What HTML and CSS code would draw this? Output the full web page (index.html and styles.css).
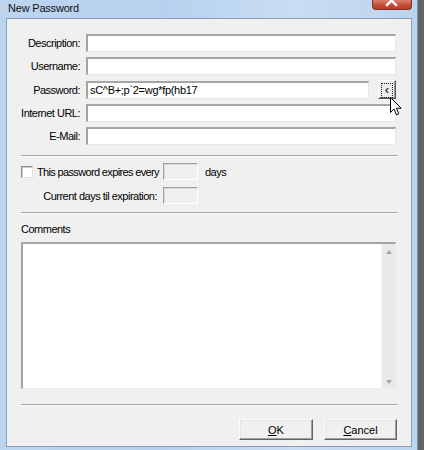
FILE: index.html
```html
<!DOCTYPE html>
<html lang="en">
<head>
<meta charset="UTF-8" />
<title>New Password</title>
<link rel="stylesheet" href="styles.css">
</head>
<body>

<div class="window">
  <div class="titlebar">
    <span class="title">New Password</span>
    <span class="close">
      <svg width="40" height="10" viewBox="0 0 40 10">
        <path d="M15 -4 L24 5 M24 -4 L15 5" stroke="#fff" stroke-width="2.4" stroke-linecap="square" />
      </svg>
    </span>
  </div>

  <div class="client">
    <!-- main fields -->
    <div class="fields">
      <label for="desc">Description:</label>
      <input id="desc" class="edit" type="text" />

      <label for="user">Username:</label>
      <input id="user" class="edit" type="text" />

      <label for="pass">Password:</label>
      <div class="pw-row">
        <input id="pass" class="edit" type="text" value="sC^B+;p`2=wg*fp(hb17" />
        <button class="gen"><span class="focus">&lsaquo;</span></button>
      </div>

      <label for="url">Internet URL:</label>
      <input id="url" class="edit" type="text" />

      <label for="mail">E-Mail:</label>
      <input id="mail" class="edit" type="text" />
    </div>

    <div class="sep"></div>

    <!-- expiration -->
    <div class="expire">
      <label class="chk"><span class="box"></span>This password expires every</label>
      <input class="small" type="text" disabled />
      <span>days</span>

      <span class="right">Current days til expiration:</span>
      <input class="small" type="text" disabled />
      <span></span>
    </div>

    <div class="sep"></div>

    <div class="comments-label">Comments</div>
    <div class="memo">
      <textarea></textarea>
      <div class="vscroll">
        <span class="arrow up"></span>
        <span class="arrow down"></span>
      </div>
    </div>

    <div class="sep sep-bottom"></div>

    <div class="buttons">
      <button class="btn"><u>O</u>K</button>
      <button class="btn"><u>C</u>ancel</button>
    </div>
  </div>
</div>

<svg class="cursor" width="13" height="19" viewBox="0 0 13 19">
  <path d="M0.5 0.5 L0.5 15.5 L4 12 L6.5 17.8 L8.8 16.8 L6.4 11.2 L11.2 11.2 Z" fill="#fff" stroke="#000" stroke-width="1" stroke-linejoin="miter" />
</svg>

</body>
</html>
```

FILE: styles.css
```css
body {
  margin: 0;
  width: 424px;
  height: 450px;
  overflow: hidden;
  background: #646464;
  font-family: "Liberation Sans", Arial, sans-serif;
  font-size: 11px;
  letter-spacing: -0.5px;
  color: #000;
}
.window {
  width: 418px;
  height: 450px;
  background: linear-gradient(to right, #bcd5ef, #b7d1ee 40%, #c9ddf3 70%, #bbd4ef);
  border-right: 1px solid #7892b2;
  box-sizing: border-box;
}
.titlebar {
  height: 18px;
  display: flex;
  align-items: flex-start;
}
.title {
  font-size: 11px;
  letter-spacing: -0.2px;
  margin: 2px 0 0 8px;
  color: #111;
}
.close {
  margin-left: auto;
  margin-right: 5px;
  width: 40px;
  height: 10px;
  background: linear-gradient(#d9816f, #c44a35 60%, #b73d2a);
  border: 1px solid #823428;
  border-top: none;
  border-radius: 0 0 4px 4px;
  box-sizing: border-box;
  overflow: hidden;
}
.close svg {
  display: block;
  margin-left: -1px;
}
.client {
  margin: 0 5px 0 6px;
  height: 429px;
  border: 1px solid #8a9db4;
  background: #f0f0f0;
  box-sizing: border-box;
}
.fields {
  display: grid;
  grid-template-columns: 66px 310px;
  column-gap: 6px;
  row-gap: 5px;
  padding: 15px 0 0 7px;
  align-items: center;
}
.fields label {
  text-align: right;
}
.edit {
  height: 18px;
  box-sizing: border-box;
  margin: 0;
  padding: 0 2px 0 2px;
  font: inherit;
  letter-spacing: -0.3px;
  color: #000;
  background: #fff;
  border-style: solid;
  border-width: 2px 1px 1px 2px;
  border-color: #a5a5a5 #e6e6e6 #e6e6e6 #a5a5a5;
  outline: none;
}
.pw-row {
  display: flex;
  align-items: center;
  gap: 9px;
}
.pw-row .edit {
  width: 283px;
}
.gen {
  width: 18px;
  height: 19px;
  margin: 0;
  padding: 2px;
  background: #ececec;
  border: 1px solid;
  border-color: #fff #555 #555 #fff;
  box-shadow: inset -1px -1px 0 #a0a0a0;
  box-sizing: border-box;
}
.gen .focus {
  display: block;
  height: 13px;
  border: 1px dotted #222;
  font-size: 13px;
  line-height: 11px;
  color: #000;
  text-align: center;
}
.sep {
  margin: 10px 0 0 14px;
  width: 377px;
  border-top: 1px solid #a3a3a3;
  border-bottom: 1px solid #fcfcfc;
}
.expire {
  display: grid;
  grid-template-columns: 136px 35px auto;
  column-gap: 6px;
  row-gap: 7px;
  align-items: center;
  margin: 6px 0 0 14px;
  white-space: nowrap;
}
.expire > span:nth-child(3) {
  padding-left: 1px;
}
.chk {
  display: flex;
  align-items: center;
  gap: 4px;
  letter-spacing: -0.65px;
}
.chk .box {
  flex: none;
  width: 12px;
  height: 12px;
  box-sizing: border-box;
  background: #fff;
  border: 1px solid;
  border-color: #8a8a8a #e0e0e0 #e0e0e0 #8a8a8a;
  box-shadow: inset 1px 1px 0 #d0d0d0;
}
.right {
  text-align: right;
}
.small {
  width: 35px;
  height: 17px;
  margin: 0;
  box-sizing: border-box;
  background: #f0f0f0;
  border: 1px solid;
  border-color: #a0a0a0 #fff #fff #a0a0a0;
  box-shadow: inset 1px 1px 0 #dadada;
}
.expire + .sep {
  margin-top: 8px;
}
.comments-label {
  margin: 9px 0 0 14px;
  line-height: 13px;
}
.memo {
  display: flex;
  margin: 6px 0 0 14px;
  width: 375px;
  height: 147px;
  box-sizing: border-box;
  border-style: solid;
  border-width: 2px 1px 1px 2px;
  border-color: #a5a5a5 #ececec #ececec #a5a5a5;
  background: #fff;
}
.memo textarea {
  flex: 1;
  margin: 0;
  border: none;
  outline: none;
  resize: none;
  background: #fff;
}
.vscroll {
  width: 13px;
  display: flex;
  flex-direction: column;
  justify-content: space-between;
  align-items: center;
  padding: 6px 0 4px;
  background: #e9e9e9;
  border-left: 1px solid #f6f6f6;
}
.arrow {
  width: 0;
  height: 0;
  border-left: 3.5px solid transparent;
  border-right: 3.5px solid transparent;
}
.arrow.up {
  border-bottom: 4px solid #a6a6a6;
}
.arrow.down {
  border-top: 4px solid #a6a6a6;
}
.sep-bottom {
  margin-top: 15px;
}
.buttons {
  display: flex;
  justify-content: flex-end;
  gap: 11px;
  margin-top: 13px;
  padding-right: 14px;
}
.btn {
  width: 74px;
  height: 21px;
  margin: 0;
  padding: 0;
  font: inherit;
  color: #000;
  background: #f0f0f0;
  border: 1px solid;
  border-color: #fdfdfd #646464 #646464 #fdfdfd;
  box-shadow: inset -1px -1px 0 #a0a0a0, inset 1px 1px 0 #e3e3e3;
  box-sizing: border-box;
}
.btn + .btn {
  width: 73px;
}
.cursor {
  position: absolute;
  left: 390px;
  top: 97px;
}
```
